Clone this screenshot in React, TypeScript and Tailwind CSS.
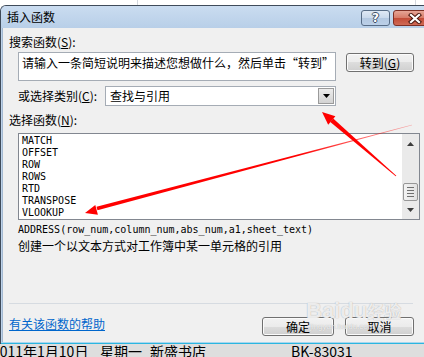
const mono = "font-['DejaVu_Sans_Mono',monospace] text-[10px] leading-[12px]";
const winBtn =
  "flex items-center justify-center rounded-[3px] border border-[#707070] bg-[linear-gradient(#f2f2f2_0%,#ebebeb_50%,#dddddd_50%,#cfcfcf_100%)] shadow-[inset_0_0_0_1px_#fbfbfb] leading-[12px]";

const functions = ['MATCH', 'OFFSET', 'ROW', 'ROWS', 'RTD', 'TRANSPOSE', 'VLOOKUP'];

function TitleBar() {
  return (
    <div className="flex h-[22px] items-start bg-[linear-gradient(#cadcf0,#b8cfe8)]">
      <span className="w-[360px] pl-[6px] pt-[5px] leading-[12px]">插入函数</span>
      {/* help button */}
      <div className="mt-[4px] flex h-[16px] w-[29px] items-center justify-center rounded-[3px] border border-[#576c86] bg-[linear-gradient(#dfe9f5_0%,#c9d9ec_50%,#b3c8e1_50%,#bcd0e8_100%)]">
        <span className="font-['DejaVu_Sans',sans-serif] text-[12px] font-bold leading-[12px] text-white [text-shadow:1px_0_#3b4f66,-1px_0_#3b4f66,0_1px_#3b4f66,0_-1px_#3b4f66]">
          ?
        </span>
      </div>
      {/* close button */}
      <div className="ml-[3px] mt-[4px] flex h-[16px] w-[43px] items-center justify-center rounded-[3px] border border-[#7d2f25] bg-[linear-gradient(#e6a596_0%,#d67a68_50%,#c24a36_50%,#cf6a55_100%)]">
        <svg width="14" height="11" viewBox="0 0 14 11">
          <path d="M3 2 L11 9 M11 2 L3 9" stroke="#4a1810" strokeWidth="4.2" strokeLinecap="square" />
          <path d="M3 2 L11 9 M11 2 L3 9" stroke="#ffffff" strokeWidth="2.2" strokeLinecap="square" />
        </svg>
      </div>
    </div>
  );
}

function ScrollBar() {
  return (
    <div className="flex w-[17px] flex-col items-center bg-[#eaeaea]">
      <svg className="mt-[8px]" width="7" height="4" viewBox="0 0 7 4">
        <path d="M3.5 0 L7 4 L0 4 Z" fill="#3c3c3c" />
      </svg>
      <div className="mt-[37px] flex h-[18px] w-[15px] flex-col items-center justify-center gap-[2px] rounded-[2px] border border-[#979797] bg-[linear-gradient(90deg,#f3f3f3,#e2e2e2)]">
        <div className="h-px w-[7px] bg-[#6f6f6f]" />
        <div className="h-px w-[7px] bg-[#6f6f6f]" />
        <div className="h-px w-[7px] bg-[#6f6f6f]" />
        <div className="h-px w-[7px] bg-[#6f6f6f]" />
      </div>
      <svg className="mt-[7px]" width="7" height="4" viewBox="0 0 7 4">
        <path d="M0 0 L7 0 L3.5 4 Z" fill="#3c3c3c" />
      </svg>
    </div>
  );
}

function DialogBody() {
  return (
    <div className="flex h-[314px] flex-col bg-[#f0f0f0]">
      <span className="ml-[6px] mt-[8px] leading-[12px]">
        搜索函数(<span className="underline">S</span>):
      </span>

      <div className="ml-[15px] mt-[4px] flex items-start">
        <div className="h-[29px] w-[318px] border border-[#a5acb5] bg-white pl-[3px] pt-[4px] leading-[12px]">
          请输入一条简短说明来描述您想做什么，然后单击“转到”
        </div>
        <button className={`ml-[10px] mt-px h-[19px] w-[68px] ${winBtn}`}>
          转到(<span className="underline">G</span>)
        </button>
      </div>

      <div className="ml-[15px] mt-[5px] flex items-center">
        <span className="w-[87px] leading-[20px]">
          或选择类别(<span className="underline">C</span>):
        </span>
        <div className="flex h-[20px] w-[231px] items-center border border-[#a5acb5] bg-white">
          <span className="flex-1 pl-[4px] leading-[12px]">查找与引用</span>
          <div className="mr-px flex h-[16px] w-[16px] items-center justify-center border border-[#9a9a9a] bg-[linear-gradient(#ececec,#d3d3d3)]">
            <svg width="7" height="4" viewBox="0 0 7 4">
              <path d="M0 0 L7 0 L3.5 4 Z" fill="#000" />
            </svg>
          </div>
        </div>
      </div>

      <span className="ml-[6px] mt-[8px] leading-[12px]">
        选择函数(<span className="underline">N</span>):
      </span>

      <div className="ml-[15px] mt-[7px] flex h-[87px] w-[402px] border border-[#828790] bg-white">
        <div className={`flex-1 pl-[3px] pt-px ${mono}`}>
          {functions.map((f) => (
            <div key={f}>{f}</div>
          ))}
        </div>
        <ScrollBar />
      </div>

      <span className={`ml-[15px] mt-[4px] ${mono}`}>ADDRESS(row_num,column_num,abs_num,a1,sheet_text)</span>
      <span className="ml-[15px] mt-[4px] leading-[12px]">创建一个以文本方式对工作簿中某一单元格的引用</span>

      <div className="ml-[6px] mt-[51px] h-px w-[404px] bg-[#d6dbe1]" />

      <div className="ml-[6px] mt-[13px] flex w-[405px] items-start justify-between">
        <a className="mt-px leading-[12px] text-[#0066cc] underline">有关该函数的帮助</a>
        <div className="flex gap-[11px]">
          <button className={`h-[19px] w-[72px] ${winBtn} border-[#3c7fb1] shadow-[inset_0_0_0_1px_#a6e1f8]`}>确定</button>
          <button className={`h-[19px] w-[69px] ${winBtn}`}>取消</button>
        </div>
      </div>
    </div>
  );
}

function Arrows() {
  return (
    <svg className="pointer-events-none absolute left-0 top-0" width="424" height="357" viewBox="0 0 424 357">
      <defs>
        <linearGradient id="fade" gradientUnits="userSpaceOnUse" x1="412" y1="125" x2="85" y2="213">
          <stop offset="0" stopColor="#ff0000" stopOpacity="0.3" />
          <stop offset="0.35" stopColor="#ff0000" stopOpacity="1" />
          <stop offset="1" stopColor="#ff0000" stopOpacity="1" />
        </linearGradient>
      </defs>
      {/* arrow to the category dropdown */}
      <polygon points="396.3,175.7 395.7,176.3 330.3,122.0 333.2,118.6" fill="#ff0000" />
      <polygon points="322,112 335.4,116.3 328.2,124.7" fill="#ff0000" />
      {/* arrow to VLOOKUP */}
      <polygon points="412.1,125.3 411.9,124.7 96.5,206.8 97.5,210.2" fill="url(#fade)" />
      <polygon points="85,213 97.9,214.7 95.3,205.1" fill="#ff0000" />
    </svg>
  );
}

function Watermark() {
  return (
    <div className="pointer-events-none absolute left-[306px] top-[300px] flex flex-col items-start text-white/80 [text-shadow:0_0_1px_#9a9a9a]">
      <div className="flex items-end font-['Liberation_Sans',sans-serif] text-[22px] font-bold leading-[22px]">
        <span>Bai</span>
        <span>du</span>
        <span className="font-['Noto_Sans_CJK_SC',sans-serif] text-[17px]">经验</span>
      </div>
      <span className="ml-[4px] font-['Liberation_Sans',sans-serif] text-[8px] leading-[9px]">jingyan.baidu.com</span>
    </div>
  );
}

export default function App() {
  return (
    <div className="relative h-[357px] w-[424px] overflow-hidden bg-white font-['Noto_Sans_CJK_SC',sans-serif] text-[12px] text-black">
      {/* sheet gridlines above the dialog */}
      <div className="flex h-[5px]">
        <div className="w-[137px]" />
        <div className="w-px bg-[#d4d8de]" />
        <div className="w-[277px]" />
        <div className="w-px bg-[#d4d8de]" />
      </div>

      <div className="flex">
        <div className="w-[2px] bg-[repeating-linear-gradient(#2a2a2a_0_3px,#ffffff_3px_6px)]" />
        <div className="w-[442px] shrink-0 overflow-hidden rounded-tl-[6px] border-l border-t border-[#3f4b5a] bg-[#bed3ea]">
          <TitleBar />
          <div className="pl-[1px]">
            <div className="border-l border-[#a4b9d1]">
              <DialogBody />
            </div>
          </div>
          <div className="h-px bg-[#a9d6ee]" />
          <div className="h-px bg-[#2bb6e0]" />
        </div>
      </div>

      {/* spreadsheet row behind the dialog */}
      <div className="flex h-[13px] whitespace-nowrap bg-[#dedede] text-[14px] leading-[14px]">
        <span className="ml-[-8px] w-[108px] shrink-0">2011年1月10日</span>
        <span className="w-[50px] shrink-0">星期一</span>
        <span className="w-[141px] shrink-0">新盛书店</span>
        <span className="shrink-0">BK-83031</span>
      </div>

      <Arrows />
      <Watermark />
    </div>
  );
}
